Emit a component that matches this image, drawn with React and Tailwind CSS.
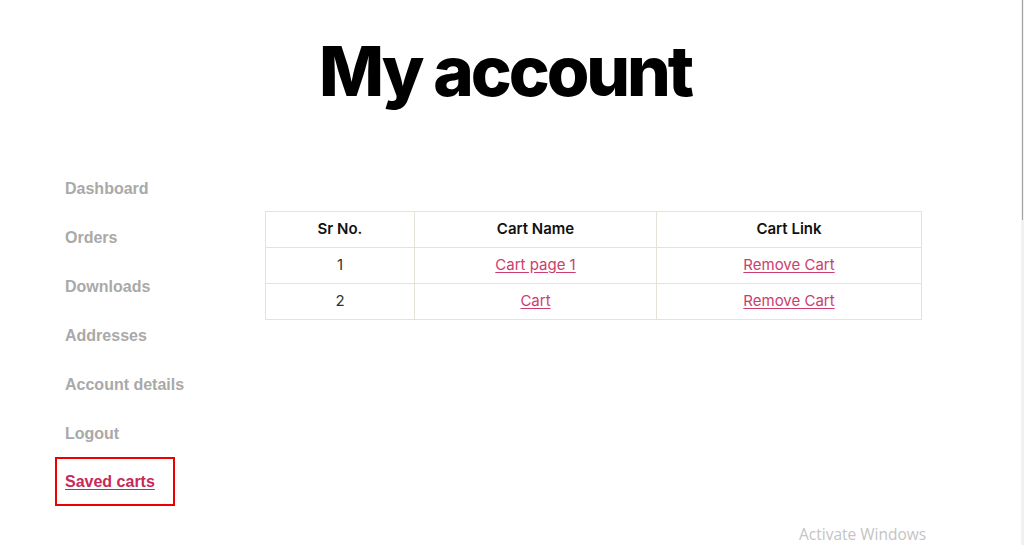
const navItems = [
  "Dashboard",
  "Orders",
  "Downloads",
  "Addresses",
  "Account details",
  "Logout",
];

const carts = [
  { id: 1, name: "Cart page 1" },
  { id: 2, name: "Cart" },
];

export default function App() {
  return (
    <div className="relative h-[545px] w-[1024px] overflow-hidden bg-white">
      {/* Page title */}
      <h1 className="pt-[37px] pr-[14px] text-center font-['Inter',sans-serif] text-[69px] leading-none font-extrabold tracking-[-0.045em] text-black">
        My account
      </h1>

      <div className="mt-[58px] flex">
        {/* Account navigation */}
        <nav className="flex w-[265px] flex-col pl-[55px] font-['Liberation_Sans',Arial,sans-serif] text-[16px] font-bold">
          {navItems.map((item) => (
            <a
              key={item}
              href="#"
              className="flex h-[49px] items-center px-[10px] text-[#a9a9a9]"
            >
              {item}
            </a>
          ))}
          <a
            href="#"
            className="-mt-[1px] flex h-[49px] w-[120px] items-center border-2 border-[#ee0000] px-[8px] text-[#c8285a] underline underline-offset-2"
          >
            Saved carts
          </a>
        </nav>

        {/* Saved carts table */}
        <div className="pt-[47px]">
          <table className="w-[657px] border-collapse font-['Inter',sans-serif] text-[15px]">
            <thead>
              <tr className="h-[36px]">
                <th className="w-[149px] border border-[#e6e2da] font-semibold text-[#111]">
                  Sr No.
                </th>
                <th className="w-[242px] border border-[#e6e2da] font-semibold text-[#111]">
                  Cart Name
                </th>
                <th className="border border-[#e6e2da] font-semibold text-[#111]">
                  Cart Link
                </th>
              </tr>
            </thead>
            <tbody>
              {carts.map((c) => (
                <tr key={c.id} className="h-[36px] text-center">
                  <td className="border border-[#e6e2da] text-[#333]">{c.id}</td>
                  <td className="border border-[#e6e2da]">
                    <a href="#" className="text-[#cc3d6d] underline underline-offset-2">
                      {c.name}
                    </a>
                  </td>
                  <td className="border border-[#e6e2da]">
                    <a href="#" className="text-[#cc3d6d] underline underline-offset-2">
                      Remove Cart
                    </a>
                  </td>
                </tr>
              ))}
            </tbody>
          </table>
        </div>
      </div>

      {/* Windows watermark */}
      <div className="absolute top-[525px] left-[799px] font-['Open_Sans',sans-serif] text-[15.5px] leading-[18px] whitespace-nowrap text-[#c4c4c4]">
        Activate Windows
      </div>

      {/* Scrollbar */}
      <div className="absolute top-0 right-0 h-full w-[3px] bg-[#f1f1f1]">
        <div className="ml-[1px] h-[220px] w-[1px] bg-[#a3a3a3]" />
      </div>
    </div>
  );
}
